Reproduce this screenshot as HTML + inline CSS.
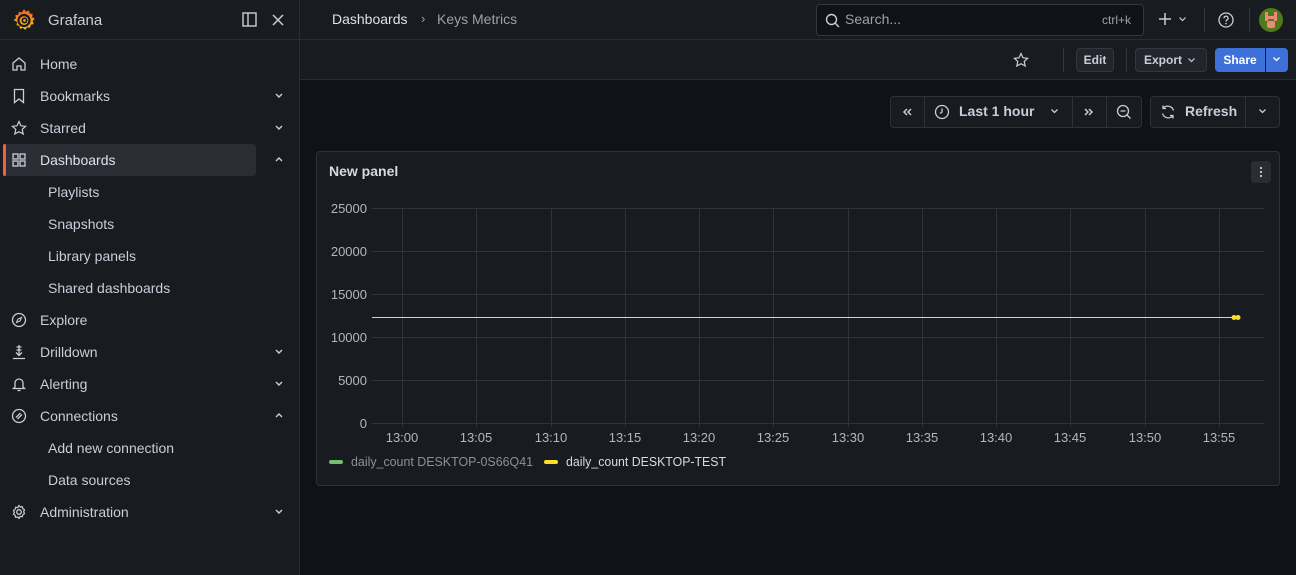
<!DOCTYPE html>
<html><head><meta charset="utf-8"><style>
*{box-sizing:border-box;margin:0;padding:0}
body{width:1296px;height:575px;overflow:hidden;background:#111217;font-family:"Liberation Sans",sans-serif;color:#ccccdc;font-size:14px;position:relative}
.abs{position:absolute}
#side{left:0;top:0;width:300px;height:575px;background:#181b1f;border-right:1px solid #2a2d33}
.nav{position:absolute;left:0;width:300px;height:32px;line-height:32px;font-size:14px;color:#ccccdc}
.nav svg.ic{position:absolute;left:11px;top:8px}
.nav .t{position:absolute;left:40px}
.nav .t2{position:absolute;left:48px}
.nav .ch{position:absolute;left:274px;top:12px}
#top{left:300px;top:0;width:996px;height:80px;background:#181b1f}
.btn{position:absolute;border:1px solid #34373d;background:#22252b;border-radius:4px;height:24px;line-height:22px;font-size:12px;color:#ccccdc;font-weight:bold}
</style></head><body>
<div id="side" class="abs">
  <svg class="abs" style="left:11px;top:8px" width="26" height="24" viewBox="0 0 26 24">
    <defs><linearGradient id="g" x1="0" y1="1" x2="0" y2="0"><stop offset="0" stop-color="#fbca0a"/><stop offset="1" stop-color="#f05a28"/></linearGradient></defs>
    <path fill="url(#g)" d="M13 1l2 2.5 3-1 .7 3 3 .5-.6 3 2.6 1.8-2 2.3 1 3-3 .7-.6 3-3-.5-1.8 2.6-2.3-2-3 1-.5-3-3-.8 .7-3L2.5 12 5 10.2 4.3 7.3l3-.6.5-3 3 .8z"/>
    <circle cx="13" cy="12.5" r="5.5" fill="none" stroke="#181b1f" stroke-width="2.2"/>
    <circle cx="13.5" cy="12.5" r="2.2" fill="none" stroke="#181b1f" stroke-width="1.6"/>
  </svg>
  <div class="abs" style="left:48px;top:12px;font-size:15px;color:#ccccdc">Grafana</div>
  <svg class="abs" style="left:242px;top:12px" width="15" height="15" viewBox="0 0 15 15"><rect x="1" y="1" width="13" height="13" fill="none" stroke="#ccccdc" stroke-width="1.4"/><line x1="6" y1="1" x2="6" y2="14" stroke="#ccccdc" stroke-width="1.4"/></svg>
  <svg class="abs" style="left:272px;top:14px" width="12" height="12" viewBox="0 0 12 12"><path d="M1 1L11 11M11 1L1 11" stroke="#ccccdc" stroke-width="1.5"/></svg>
  <div class="abs" style="left:0;top:39px;width:299px;height:1px;background:#2a2d33"></div>

  <div class="nav" style="top:48px"><svg class="ic" width="16" height="16" viewBox="0 0 16 16"><path d="M2 7L8 2l6 5v7H10V10H6v4H2z" fill="none" stroke="#ccccdc" stroke-width="1.3"/></svg><span class="t">Home</span></div>
  <div class="nav" style="top:80px"><svg class="ic" width="16" height="16" viewBox="0 0 16 16"><path d="M3.5 1.5h9v13L8 11l-4.5 3.5z" fill="none" stroke="#ccccdc" stroke-width="1.3"/></svg><span class="t">Bookmarks</span><svg class="ch" width="10" height="8" viewBox="0 0 10 8"><path d="M2 2l3 3 3-3" fill="none" stroke="#ccccdc" stroke-width="1.4"/></svg></div>
  <div class="nav" style="top:112px"><svg class="ic" width="16" height="16" viewBox="0 0 16 16"><path d="M8 1.5l2 4.3 4.6.5-3.4 3.1 1 4.6L8 11.7 3.8 14l1-4.6L1.4 6.3 6 5.8z" fill="none" stroke="#ccccdc" stroke-width="1.2"/></svg><span class="t">Starred</span><svg class="ch" width="10" height="8" viewBox="0 0 10 8"><path d="M2 2l3 3 3-3" fill="none" stroke="#ccccdc" stroke-width="1.4"/></svg></div>
  <div class="abs" style="left:3px;top:144px;width:253px;height:32px;background:#2a2d33;border-radius:4px"></div>
  <div class="abs" style="left:3px;top:144px;width:3px;height:32px;background:#f55f3e;border-radius:2px"></div>
  <div class="nav" style="top:144px"><svg class="ic" width="16" height="16" viewBox="0 0 16 16"><g fill="none" stroke="#ccccdc" stroke-width="1.3"><rect x="2" y="2" width="5" height="5"/><rect x="9" y="2" width="5" height="5"/><rect x="2" y="9" width="5" height="5"/><rect x="9" y="9" width="5" height="5"/></g></svg><span class="t" style="color:#e0e0ea">Dashboards</span><svg class="ch" width="10" height="8" viewBox="0 0 10 8"><path d="M2 5l3-3 3 3" fill="none" stroke="#ccccdc" stroke-width="1.4"/></svg></div>
  <div class="nav" style="top:176px"><span class="t2">Playlists</span></div>
  <div class="nav" style="top:208px"><span class="t2">Snapshots</span></div>
  <div class="nav" style="top:240px"><span class="t2">Library panels</span></div>
  <div class="nav" style="top:272px"><span class="t2">Shared dashboards</span></div>
  <div class="nav" style="top:304px"><svg class="ic" width="16" height="16" viewBox="0 0 16 16"><circle cx="8" cy="8" r="6.5" fill="none" stroke="#ccccdc" stroke-width="1.3"/><path d="M10.5 5.5L9 9 5.5 10.5 7 7z" fill="none" stroke="#ccccdc" stroke-width="1.1"/></svg><span class="t">Explore</span></div>
  <div class="nav" style="top:336px"><svg class="ic" width="16" height="16" viewBox="0 0 16 16"><path d="M8 1v10M5.5 3h5M5.5 6h5M5 8.5l3 3 3-3M2 14.5h12" fill="none" stroke="#ccccdc" stroke-width="1.3"/></svg><span class="t">Drilldown</span><svg class="ch" width="10" height="8" viewBox="0 0 10 8"><path d="M2 2l3 3 3-3" fill="none" stroke="#ccccdc" stroke-width="1.4"/></svg></div>
  <div class="nav" style="top:368px"><svg class="ic" width="16" height="16" viewBox="0 0 16 16"><path d="M4 11V7a4 4 0 018 0v4l1.5 1.5h-11zM6.5 14.5h3" fill="none" stroke="#ccccdc" stroke-width="1.3"/></svg><span class="t">Alerting</span><svg class="ch" width="10" height="8" viewBox="0 0 10 8"><path d="M2 2l3 3 3-3" fill="none" stroke="#ccccdc" stroke-width="1.4"/></svg></div>
  <div class="nav" style="top:400px"><svg class="ic" width="16" height="16" viewBox="0 0 16 16"><circle cx="8" cy="8" r="6.5" fill="none" stroke="#ccccdc" stroke-width="1.3"/><path d="M5 9.5l4.5-4.5M6.5 11l4.5-4.5" fill="none" stroke="#ccccdc" stroke-width="1.3"/></svg><span class="t">Connections</span><svg class="ch" width="10" height="8" viewBox="0 0 10 8"><path d="M2 5l3-3 3 3" fill="none" stroke="#ccccdc" stroke-width="1.4"/></svg></div>
  <div class="nav" style="top:432px"><span class="t2">Add new connection</span></div>
  <div class="nav" style="top:464px"><span class="t2">Data sources</span></div>
  <div class="nav" style="top:496px"><svg class="ic" width="16" height="16" viewBox="0 0 16 16"><circle cx="8" cy="8" r="2.3" fill="none" stroke="#ccccdc" stroke-width="1.3"/><path d="M8 1.5l1.3 1.6 2-.5.5 2 1.7 1.2-.9 1.9.9 1.9-1.7 1.2-.5 2-2-.5L8 14.5l-1.3-1.6-2 .5-.5-2-1.7-1.2.9-1.9-.9-1.9 1.7-1.2.5-2 2 .5z" fill="none" stroke="#ccccdc" stroke-width="1.2"/></svg><span class="t">Administration</span><svg class="ch" width="10" height="8" viewBox="0 0 10 8"><path d="M2 2l3 3 3-3" fill="none" stroke="#ccccdc" stroke-width="1.4"/></svg></div>
</div>

<div id="top" class="abs">
  <div class="abs" style="left:0;top:39px;width:996px;height:1px;background:#2a2d33"></div>
  <div class="abs" style="left:0;top:79px;width:996px;height:1px;background:#2a2d33"></div>
  <div class="abs" style="left:32px;top:11px;font-size:14px;color:#e0e0ea">Dashboards</div>
  <div class="abs" style="left:121px;top:11px;font-size:13px;color:#9fa1a8">›</div>
  <div class="abs" style="left:137px;top:11px;font-size:14px;color:#9fa1a8">Keys Metrics</div>
  <div class="abs" style="left:516px;top:4px;width:328px;height:32px;background:#111217;border:1px solid #34373d;border-radius:4px"></div>
  <svg class="abs" style="left:525px;top:13px" width="15" height="15" viewBox="0 0 15 15"><circle cx="6.5" cy="6.5" r="5" fill="none" stroke="#ccccdc" stroke-width="1.4"/><path d="M10 10l4 4" stroke="#ccccdc" stroke-width="1.4"/></svg>
  <div class="abs" style="left:545px;top:11px;font-size:14px;color:#9fa1a8">Search...</div>
  <div class="abs" style="left:802px;top:13px;font-size:12px;color:#9fa1a8">ctrl+k</div>
  <svg class="abs" style="left:858px;top:12px" width="14" height="14" viewBox="0 0 14 14"><path d="M7 1v12M1 7h12" stroke="#ccccdc" stroke-width="1.5"/></svg>
  <svg class="abs" style="left:878px;top:16px" width="9" height="7" viewBox="0 0 9 7"><path d="M1.5 1.5l3 3 3-3" fill="none" stroke="#ccccdc" stroke-width="1.2"/></svg>
  <div class="abs" style="left:904px;top:8px;width:1px;height:24px;background:#34373d"></div>
  <svg class="abs" style="left:918px;top:12px" width="16" height="16" viewBox="0 0 16 16"><circle cx="8" cy="8" r="7" fill="none" stroke="#ccccdc" stroke-width="1.3"/><path d="M6 6.3a2 2 0 113 1.6c-.7.4-1 .8-1 1.6" fill="none" stroke="#ccccdc" stroke-width="1.3"/><circle cx="8" cy="11.6" r=".8" fill="#ccccdc"/></svg>
  <div class="abs" style="left:949px;top:8px;width:1px;height:24px;background:#34373d"></div>
  <div class="abs" style="left:959px;top:8px;width:24px;height:24px;border-radius:50%;background:#4f7a1c;overflow:hidden">
    <div class="abs" style="left:6px;top:4px;width:3px;height:9px;background:#e98a7b"></div>
    <div class="abs" style="left:15px;top:4px;width:3px;height:9px;background:#e98a7b"></div>
    <div class="abs" style="left:6px;top:8px;width:12px;height:3px;background:#e98a7b"></div>
    <div class="abs" style="left:8px;top:13px;width:8px;height:7px;background:#e98a7b;border-radius:2px"></div>
  </div>
  <svg class="abs" style="left:713px;top:52px" width="16" height="16" viewBox="0 0 16 16"><path d="M8 1.5l2 4.3 4.6.5-3.4 3.1 1 4.6L8 11.7 3.8 14l1-4.6L1.4 6.3 6 5.8z" fill="none" stroke="#ccccdc" stroke-width="1.2"/></svg>
  <div class="abs" style="left:763px;top:48px;width:1px;height:24px;background:#34373d"></div>
  <div class="btn" style="left:776px;top:48px;width:38px;text-align:center">Edit</div>
  <div class="abs" style="left:826px;top:48px;width:1px;height:24px;background:#34373d"></div>
  <div class="btn" style="left:835px;top:48px;width:72px;padding-left:8px">Export</div>
  <svg class="abs" style="left:887px;top:57px" width="9" height="7" viewBox="0 0 9 7"><path d="M1.5 1.5l3 3 3-3" fill="none" stroke="#ccccdc" stroke-width="1.2"/></svg>
  <div class="abs" style="left:915px;top:48px;width:50px;height:24px;background:#3d71d9;border-radius:4px 0 0 4px;color:#fff;font-size:12px;font-weight:bold;text-align:center;line-height:24px">Share</div>
  <div class="abs" style="left:966px;top:48px;width:22px;height:24px;background:#3d71d9;border-radius:0 4px 4px 0"></div>
  <svg class="abs" style="left:972px;top:56px" width="9" height="7" viewBox="0 0 9 7"><path d="M1.5 1.5l3 3 3-3" fill="none" stroke="#fff" stroke-width="1.3"/></svg>
</div>

<div class="abs" style="left:890px;top:96px;width:252px;height:32px;background:#181b1f;border:1px solid #2e3137;border-radius:4px"></div>
<div class="abs" style="left:924px;top:97px;width:1px;height:30px;background:#2e3137"></div>
<div class="abs" style="left:1072px;top:97px;width:1px;height:30px;background:#2e3137"></div>
<div class="abs" style="left:1106px;top:97px;width:1px;height:30px;background:#2e3137"></div>
<svg class="abs" style="left:901px;top:106px" width="12" height="12" viewBox="0 0 12 12"><path d="M6 3L3 6l3 3M10 3L7 6l3 3" fill="none" stroke="#ccccdc" stroke-width="1.5"/></svg>
<svg class="abs" style="left:934px;top:104px" width="16" height="16" viewBox="0 0 16 16"><circle cx="8" cy="8" r="6.5" fill="none" stroke="#ccccdc" stroke-width="1.3"/><path d="M8 4.5V8l-2 1.5" fill="none" stroke="#ccccdc" stroke-width="1.3"/></svg>
<div class="abs" style="left:959px;top:103px;font-size:14px;font-weight:bold;color:#ccccdc">Last 1 hour</div>
<svg class="abs" style="left:1050px;top:108px" width="9" height="7" viewBox="0 0 9 7"><path d="M1.5 1.5l3 3 3-3" fill="none" stroke="#ccccdc" stroke-width="1.3"/></svg>
<svg class="abs" style="left:1083px;top:106px" width="12" height="12" viewBox="0 0 12 12"><path d="M2 3l3 3-3 3M6 3l3 3-3 3" fill="none" stroke="#ccccdc" stroke-width="1.5"/></svg>
<svg class="abs" style="left:1116px;top:104px" width="16" height="16" viewBox="0 0 16 16"><circle cx="7" cy="7" r="5.5" fill="none" stroke="#ccccdc" stroke-width="1.3"/><path d="M11 11l3.5 3.5M4.5 7h5" stroke="#ccccdc" stroke-width="1.3"/></svg>
<div class="abs" style="left:1150px;top:96px;width:130px;height:32px;background:#181b1f;border:1px solid #2e3137;border-radius:4px"></div>
<div class="abs" style="left:1245px;top:97px;width:1px;height:30px;background:#2e3137"></div>
<svg class="abs" style="left:1160px;top:104px" width="16" height="16" viewBox="0 0 16 16"><path d="M13.5 6.5A6 6 0 003 4.5M2.5 9.5A6 6 0 0013 11.5" fill="none" stroke="#ccccdc" stroke-width="1.3"/><path d="M3 1.5v3h3M13 14.5v-3h-3" fill="none" stroke="#ccccdc" stroke-width="1.3"/></svg>
<div class="abs" style="left:1185px;top:103px;font-size:14px;font-weight:bold;color:#ccccdc">Refresh</div>
<svg class="abs" style="left:1258px;top:108px" width="9" height="7" viewBox="0 0 9 7"><path d="M1.5 1.5l3 3 3-3" fill="none" stroke="#ccccdc" stroke-width="1.3"/></svg>

<div class="abs" style="left:316px;top:151px;width:964px;height:335px;background:#181b1f;border:1px solid #2e3137;border-radius:4px"></div>
<div class="abs" style="left:329px;top:163px;font-size:14px;font-weight:bold;color:#d8d9e3">New panel</div>
<div class="abs" style="left:1251px;top:161px;width:20px;height:22px;background:#2a2d33;border-radius:4px"></div>
<svg class="abs" style="left:1259px;top:165px" width="4" height="14" viewBox="0 0 4 14"><circle cx="2" cy="3" r="1.1" fill="#ccccdc"/><circle cx="2" cy="7" r="1.1" fill="#ccccdc"/><circle cx="2" cy="11" r="1.1" fill="#ccccdc"/></svg>
<svg class="abs" style="left:0;top:0" width="1296" height="575" font-family="Liberation Sans, sans-serif" font-size="13" fill="#b4b6bd">
  <g stroke="#2f3237" stroke-width="1">
    <line x1="372" y1="208.5" x2="1264" y2="208.5"/><line x1="372" y1="251.5" x2="1264" y2="251.5"/><line x1="372" y1="294.5" x2="1264" y2="294.5"/><line x1="372" y1="337.5" x2="1264" y2="337.5"/><line x1="372" y1="380.5" x2="1264" y2="380.5"/><line x1="372" y1="423.5" x2="1264" y2="423.5"/>
    <line x1="402.5" y1="208" x2="402.5" y2="427"/><line x1="476.5" y1="208" x2="476.5" y2="427"/><line x1="551.5" y1="208" x2="551.5" y2="427"/><line x1="625.5" y1="208" x2="625.5" y2="427"/><line x1="699.5" y1="208" x2="699.5" y2="427"/><line x1="773.5" y1="208" x2="773.5" y2="427"/><line x1="848.5" y1="208" x2="848.5" y2="427"/><line x1="922.5" y1="208" x2="922.5" y2="427"/><line x1="996.5" y1="208" x2="996.5" y2="427"/><line x1="1070.5" y1="208" x2="1070.5" y2="427"/><line x1="1145.5" y1="208" x2="1145.5" y2="427"/><line x1="1219.5" y1="208" x2="1219.5" y2="427"/>
  </g>
  <g text-anchor="end"><text x="367" y="213">25000</text><text x="367" y="256">20000</text><text x="367" y="299">15000</text><text x="367" y="342">10000</text><text x="367" y="385">5000</text><text x="367" y="428">0</text></g>
  <g text-anchor="middle"><text x="402" y="442">13:00</text><text x="476" y="442">13:05</text><text x="551" y="442">13:10</text><text x="625" y="442">13:15</text><text x="699" y="442">13:20</text><text x="773" y="442">13:25</text><text x="848" y="442">13:30</text><text x="922" y="442">13:35</text><text x="996" y="442">13:40</text><text x="1070" y="442">13:45</text><text x="1145" y="442">13:50</text><text x="1219" y="442">13:55</text></g>
  <line x1="372" y1="317.5" x2="1238" y2="317.5" stroke="#fade2a" stroke-width="1"/>
  <circle cx="1234" cy="317.5" r="2.5" fill="#fade2a"/><circle cx="1238" cy="317.5" r="2.5" fill="#fade2a"/>
  <rect x="329" y="460" width="14" height="4" rx="2" fill="#73bf69"/>
  <text x="351" y="466" fill="#8e9099" textLength="182" lengthAdjust="spacingAndGlyphs">daily_count DESKTOP-0S66Q41</text>
  <rect x="544" y="460" width="14" height="4" rx="2" fill="#fade2a"/>
  <text x="566" y="466" fill="#d8d9e3" textLength="160" lengthAdjust="spacingAndGlyphs">daily_count DESKTOP-TEST</text>
</svg>
</body></html>
